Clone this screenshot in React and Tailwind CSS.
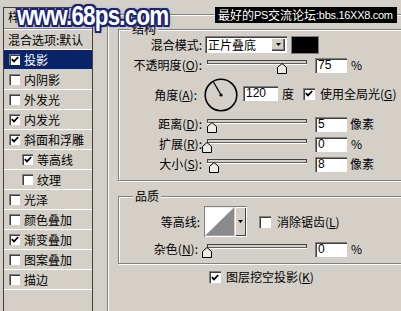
import React from "react";

const layers = [
  { t: "投影", c: true, sel: true },
  { t: "内阴影" },
  { t: "外发光" },
  { t: "内发光", c: true },
  { t: "斜面和浮雕", c: true },
  { t: "等高线", c: true, ind: true },
  { t: "纹理", ind: true },
  { t: "光泽" },
  { t: "颜色叠加" },
  { t: "渐变叠加", c: true },
  { t: "图案叠加" },
  { t: "描边" },
];

const Tick = () => (
  <svg width="8" height="7" viewBox="0 0 8 7">
    <polyline points="0.8,3.2 3,5.4 7.2,1" fill="none" stroke="#000" strokeWidth="1.8" />
  </svg>
);

const ListBox = ({ checked }) => (
  <span className="flex h-[11px] w-[11px] shrink-0 items-center justify-center bg-white shadow-[inset_1px_1px_0_#808080,inset_2px_2px_0_#404040]">
    {checked && <Tick />}
  </span>
);

const DlgBox = ({ checked }) => (
  <span className="flex h-[12px] w-[12px] shrink-0 items-center justify-center bg-white shadow-[inset_1px_1px_0_#808080,inset_2px_2px_0_#404040,inset_-1px_-1px_0_#ffffff]">
    {checked && <Tick />}
  </span>
);

const Field = ({ value, w = "w-[32px]" }) => (
  <div
    className={`${w} h-[15px] bg-white pl-[3px] font-['Liberation_Sans',sans-serif] text-[12px] leading-[15px] shadow-[inset_1px_1px_0_#808080,inset_2px_2px_0_#404040,inset_-1px_-1px_0_#ffffff]`}
  >
    {value}
  </div>
);

// thumb centre offset from track start, in px
const Slider = ({ at }) => (
  <div className="relative h-[14px] w-[100px]">
    <div className="mt-[3px] h-[4px] border border-[#404040] border-b-[#606060] bg-[#d4d0c8] shadow-[0_1px_0_#ffffff]" />
    <svg
      className="absolute top-[3px]"
      style={{ left: at - 5 }}
      width="10"
      height="11"
      viewBox="0 0 10 11"
    >
      <polygon points="0.5,4.5 5,0.5 9.5,4.5 9.5,10.5 0.5,10.5" fill="#ecebe6" stroke="#000" strokeWidth="1" />
    </svg>
  </div>
);

const Label = ({ children, cls }) => (
  <div className={`w-[84px] shrink-0 text-right ${cls}`}>{children}</div>
);

const Key = ({ k }) => (
  <span>
    (<span className="underline">{k}</span>)
  </span>
);

export default function App() {
  return (
    <div className="relative h-[311px] w-[401px] overflow-hidden bg-[#d4d0c8] font-['Noto_Sans_CJK_SC',sans-serif] text-[12px] leading-[16px] text-black">
      <div className="flex h-full">
        {/* style list */}
        <div className="ml-[3px] mt-[7px] w-[90px] shrink-0 border border-[#404040] border-b-0">
          <div className="h-[21px] border-b border-[#808080] pl-[4px] pt-[1px] shadow-[0_1px_0_#ffffff]">
            样式
          </div>
          <div className="mt-[1px] flex h-[20px] items-center border-b border-white pl-[4px]">
            混合选项:默认
          </div>
          {layers.map((l) => (
            <div
              key={l.t}
              className={`flex h-[20px] items-center border-b ${
                l.sel ? "border-[#d4d0c8] bg-[#0a246a] text-white" : "border-white"
              } ${l.ind ? "pl-[18px]" : "pl-[5px]"}`}
            >
              <ListBox checked={l.c} />
              <span className="ml-[4px]">{l.t}</span>
            </div>
          ))}
        </div>

        {/* drop shadow panel */}
        <div className="ml-[14px] mt-[14px] flex-1 border-l border-t border-[#808080] shadow-[inset_1px_1px_0_#ffffff]">
          {/* structure */}
          <div className="ml-[10px] mt-[14px] h-[152px] w-[300px] border border-[#808080] shadow-[inset_1px_1px_0_#ffffff,1px_1px_0_#ffffff]">
            <div className="-mt-[9px] ml-[11px] h-[16px] w-fit bg-[#d4d0c8] px-[2px]">结构</div>

            <div className="-mt-[1px] flex h-[17px] items-center">
              <Label cls="pr-[1px]">混合模式:</Label>
              <div className="ml-[2px] flex h-[17px] w-[82px] bg-white shadow-[inset_1px_1px_0_#808080,inset_2px_2px_0_#404040,inset_-1px_-1px_0_#ffffff]">
                <span className="flex-1 pl-[3px] leading-[17px]">正片叠底</span>
                <span className="my-[2px] mr-[2px] flex w-[14px] items-center justify-center bg-[#d4d0c8] shadow-[inset_1px_1px_0_#ffffff,inset_-1px_-1px_0_#404040,inset_-2px_-2px_0_#808080]">
                  <svg width="5" height="3" viewBox="0 0 5 3">
                    <polygon points="0,0 5,0 2.5,3" fill="#000" />
                  </svg>
                </span>
              </div>
              <div className="ml-[5px] h-[16px] w-[26px] bg-black shadow-[0_0_0_1px_#808080]" />
            </div>

            <div className="mt-[4px] flex h-[16px] items-center">
              <Label cls="pr-[1px]">
                不透明度<Key k="O" />:
              </Label>
              <div className="ml-[4px]">
                <Slider at={75} />
              </div>
              <div className="ml-[8px]">
                <Field value="75" />
              </div>
              <span className="ml-[4px]">%</span>
            </div>

            <div className="mt-[5px] flex h-[34px] items-center">
              <Label cls="pr-[6px]">
                角度<Key k="A" />:
              </Label>
              <svg className="ml-[1px]" width="34" height="34" viewBox="0 0 34 34">
                <circle cx="17" cy="17" r="15.8" fill="none" stroke="#000" strokeWidth="1.6" />
                <line x1="17" y1="17" x2="9.5" y2="4" stroke="#000" strokeWidth="1.3" />
                <circle cx="17" cy="17" r="1.6" fill="#000" />
              </svg>
              <div className="ml-[5px] -mt-[3px]">
                <Field value="120" w="w-[35px]" />
              </div>
              <span className="ml-[4px] -mt-[3px]">度</span>
              <div className="ml-[9px] -mt-[3px] flex items-center">
                <DlgBox checked />
                <span className="ml-[5px] whitespace-nowrap">
                  使用全局光<Key k="G" />
                </span>
              </div>
            </div>

            <div className="mt-[2px] flex h-[20px] items-center">
              <Label cls="pr-[1px]">
                距离<Key k="D" />:
              </Label>
              <div className="ml-[4px]">
                <Slider at={5} />
              </div>
              <div className="ml-[8px]">
                <Field value="5" />
              </div>
              <span className="ml-[3px]">像素</span>
            </div>

            <div className="flex h-[20px] items-center">
              <Label cls="pr-[1px]">
                扩展<Key k="R" />:
              </Label>
              <div className="ml-[4px]">
                <Slider at={0} />
              </div>
              <div className="ml-[8px]">
                <Field value="0" />
              </div>
              <span className="ml-[4px]">%</span>
            </div>

            <div className="flex h-[20px] items-center">
              <Label cls="pr-[1px]">
                大小<Key k="S" />:
              </Label>
              <div className="ml-[4px]">
                <Slider at={7} />
              </div>
              <div className="ml-[8px]">
                <Field value="8" />
              </div>
              <span className="ml-[3px]">像素</span>
            </div>
          </div>

          {/* quality */}
          <div className="ml-[10px] mt-[15px] h-[68px] w-[300px] border border-[#808080] shadow-[inset_1px_1px_0_#ffffff,1px_1px_0_#ffffff]">
            <div className="-mt-[9px] ml-[14px] h-[16px] w-fit bg-[#d4d0c8] px-[2px]">品质</div>

            <div className="mt-[2px] flex h-[31px] items-center">
              <Label cls="pr-[3px]">等高线:</Label>
              <div className="ml-[1px] flex h-[31px] w-[43px] shadow-[inset_1px_1px_0_#808080,inset_-1px_-1px_0_#ffffff]">
                <svg className="m-[1px]" width="30" height="29" viewBox="0 0 30 29">
                  <rect width="30" height="29" fill="#ffffff" />
                  <polygon points="0,29 30,0 30,29" fill="#8a8a8a" />
                </svg>
                <span className="my-[1px] mr-[1px] flex w-[11px] items-center justify-center bg-[#d4d0c8] shadow-[inset_1px_1px_0_#ffffff,inset_-1px_-1px_0_#404040]">
                  <svg width="5" height="3" viewBox="0 0 5 3">
                    <polygon points="0,0 5,0 2.5,3" fill="#000" />
                  </svg>
                </span>
              </div>
              <div className="ml-[12px] flex items-center">
                <DlgBox />
                <span className="ml-[6px] whitespace-nowrap">
                  消除锯齿<Key k="L" />
                </span>
              </div>
            </div>

            <div className="mt-[4px] flex h-[16px] items-center">
              <Label cls="pr-[5px]">
                杂色<Key k="N" />:
              </Label>
              <div className="ml-[4px]">
                <Slider at={0} />
              </div>
              <div className="ml-[8px]">
                <Field value="0" />
              </div>
              <span className="ml-[4px]">%</span>
            </div>
          </div>

          <div className="ml-[101px] mt-[6px] flex h-[14px] items-center">
            <DlgBox checked />
            <span className="ml-[5px] whitespace-nowrap">
              图层挖空投影<Key k="K" />
            </span>
          </div>
        </div>
      </div>

      {/* site watermarks */}
      <div className="absolute left-[17px] top-[2px] origin-left scale-x-[0.8] font-['Liberation_Sans',sans-serif] text-[28px] font-bold leading-[28px] tracking-[-1px] text-white [text-shadow:-2px_-2px_0_#1b2470,2px_-2px_0_#1b2470,-2px_2px_0_#1b2470,2px_2px_0_#1b2470,0_2px_0_#1b2470,0_-2px_0_#1b2470,2px_0_0_#1b2470,-2px_0_0_#1b2470,0_0_5px_#4a5ab0]">
        www.68ps.com
      </div>
      <div className="absolute left-[215px] top-[7px] flex h-[16px] w-[182px] items-center whitespace-nowrap bg-black pl-[3px] text-[12px] leading-[16px] text-white">
        最好的<span className="font-['Liberation_Sans',sans-serif] text-[11px] tracking-[-0.3px]">PS</span>交流论坛
        <span className="font-['Liberation_Sans',sans-serif] text-[11px] tracking-[-0.3px]">:bbs.16XX8.com</span>
      </div>
    </div>
  );
}
